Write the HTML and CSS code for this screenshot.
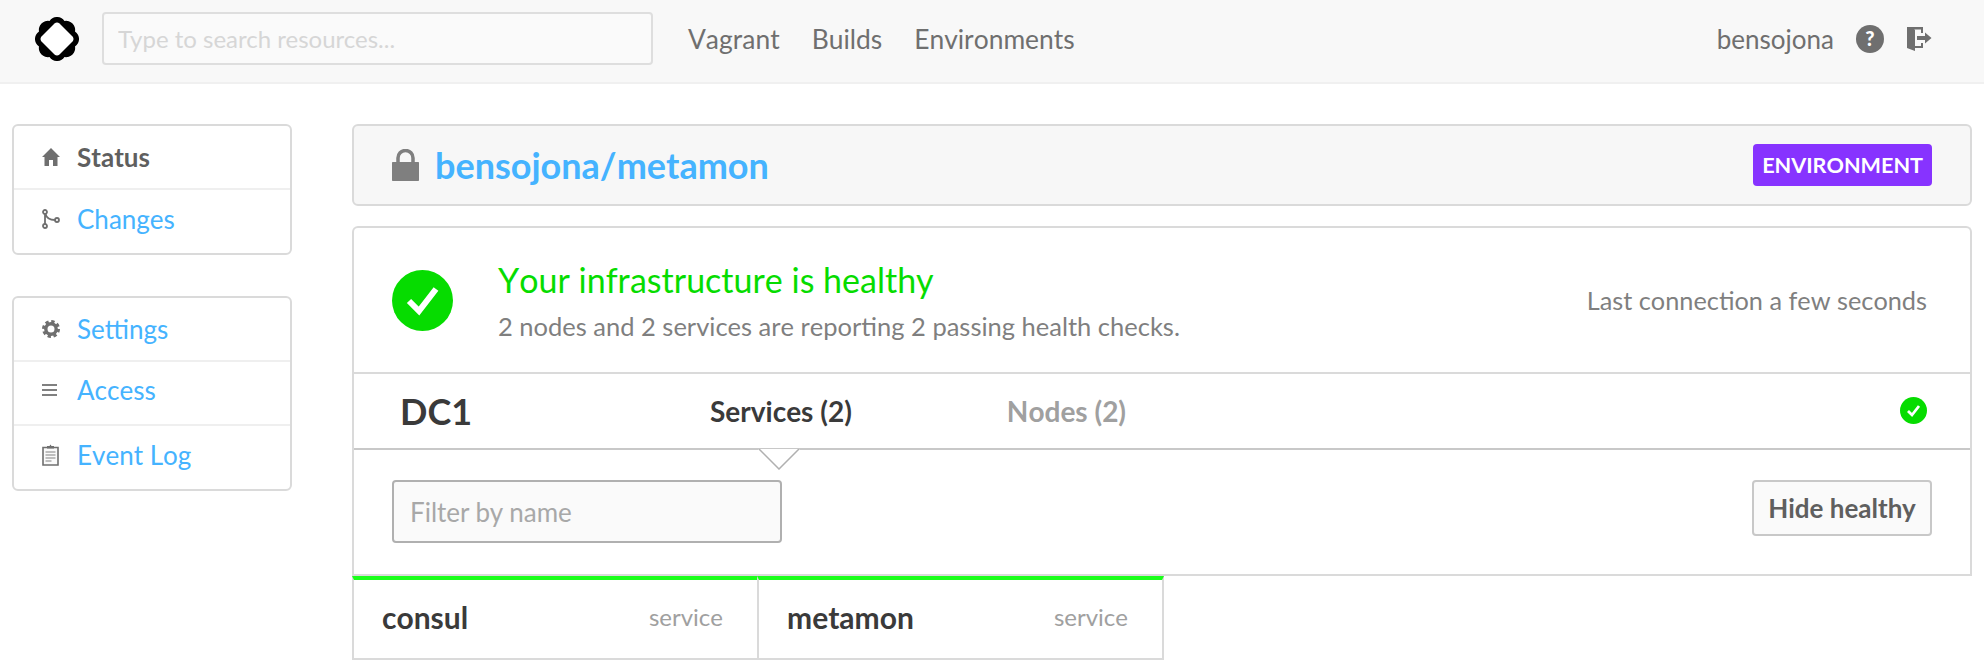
FILE: index.html

```html
<!DOCTYPE html>
<html lang="en">
<head>
  <meta charset="UTF-8">
  <title>bensojona/metamon - Status</title>
  <meta name="viewport" content="width=device-width, initial-scale=1.0">
  <link rel="stylesheet" href="styles.css">
</head>
<body>

<header class="topbar">
  <svg class="logo" viewBox="0 0 44 44">
    <path d="M14.5 4A9 9 0 0 1 29.5 4A9 9 0 0 1 40 14.5A9 9 0 0 1 40 29.5A9 9 0 0 1 29.500 40A9 9 0 0 1 14.500 40A9 9 0 0 1 4 29.500A9 9 0 0 1 4 14.500A9 9 0 0 1 14.500 4Z" fill="#000"/>
    <path d="M19.500 6.500Q22 4.500 24.500 6.500L37.500 19.500Q39.500 22 37.500 24.500L24.500 37.500Q22 39.500 19.500 37.500L6.500 24.500Q4.500 22 6.500 19.500Z" fill="#fff"/>
  </svg>
  <input class="search" type="text" placeholder="Type to search resources...">
  <nav class="topnav">
    <a href="#">Vagrant</a>
    <a href="#">Builds</a>
    <a href="#">Environments</a>
  </nav>
  <div class="account">
    <span class="username">bensojona</span>
    <svg class="help" viewBox="0 0 28 28">
      <circle cx="14" cy="14" r="14" fill="#6f6f6f"/>
      <text x="14" y="21" text-anchor="middle" class="help-mark">?</text>
    </svg>
    <svg class="logout" viewBox="0 0 25 24">
      <path d="M0 0h16v6h-2V2.500H7L8 3v16h6v-3h2v5H8v3l-8-3z" fill="#6f6f6f"/>
      <path d="M10 9h8V5.500l6.500 5.500-6.500 5.500V13h-8z" fill="#6f6f6f"/>
    </svg>
  </div>
</header>

<div class="page">
  <aside class="sidebar">
    <ul class="side-box">
      <li class="active">
        <svg class="side-icon" viewBox="0 0 18 22"><path d="M9 2l9 9h-2.500v9H11v-6H7v6H2.500v-9H0z" fill="#6f6f6f"/></svg>
        <span>Status</span>
      </li>
      <li>
        <svg class="side-icon" viewBox="0 0 18 20"><g fill="none" stroke="#6f6f6f" stroke-width="1.800"><circle cx="3" cy="3" r="2"/><circle cx="3" cy="17" r="2"/><circle cx="15" cy="11" r="2"/><path d="M3 5v10M3.500 5c1 4 5 6 9.500 6"/></g></svg>
        <a href="#">Changes</a>
      </li>
    </ul>
    <ul class="side-box">
      <li>
        <svg class="side-icon" viewBox="0 0 18 18"><g fill="none" stroke="#6f6f6f"><circle cx="9" cy="9" r="5.200" stroke-width="3.400"/><circle cx="9" cy="9" r="7.500" stroke-width="3" stroke-dasharray="3.300 2.590"/></g></svg>
        <a href="#">Settings</a>
      </li>
      <li>
        <svg class="side-icon" viewBox="0 0 18 12"><path d="M0 0h15v2H0zM0 5h15v2H0zM0 10h15v2H0z" fill="#808080"/></svg>
        <a href="#">Access</a>
      </li>
      <li>
        <svg class="side-icon" viewBox="0 0 18 22"><path d="M1 3.500h15v17.500H1z" fill="#fafafa" stroke="#6f6f6f" stroke-width="1.600"/><path d="M5 4.500V2h2.500L8.500.5 9.500 2H12v2.500z" fill="#6f6f6f"/><path d="M3.500 8h10M3.500 11h10M3.500 14h10M3.500 17h6" stroke="#aaa" stroke-width="1.400"/></svg>
        <a href="#">Event Log</a>
      </li>
    </ul>
  </aside>

  <main class="content">
    <div class="titlebar">
      <svg class="lock" viewBox="0 0 27 32"><path d="M1 13h25c.6 0 1 .4 1 1v17c0 .6-.4 1-1 1H1c-.6 0-1-.4-1-1V14c0-.6.400-1 1-1z" fill="#7f7f7f"/><path d="M6 14V9c0-4 3-7.500 7.500-7.500S21 5 21 9v5" fill="none" stroke="#7f7f7f" stroke-width="3.500"/></svg>
      <a class="repo" href="#">bensojona/metamon</a>
      <span class="badge">ENVIRONMENT</span>
    </div>

    <section class="panel">
      <div class="health">
        <svg class="health-icon" viewBox="0 0 61 61">
          <circle cx="30.500" cy="30.500" r="30.500" fill="#06dc00"/>
          <path d="M17 31l10 10 17-22" fill="none" stroke="#fff" stroke-width="6"/>
        </svg>
        <div class="health-text">
          <h2>Your infrastructure is healthy</h2>
          <p>2 nodes and 2 services are reporting 2 passing health checks.</p>
        </div>
        <span class="last-conn">Last connection a few seconds</span>
      </div>

      <div class="tabs">
        <span class="dc">DC1</span>
        <a class="tab tab-active" href="#">Services (2)</a>
        <a class="tab tab-off" href="#">Nodes (2)</a>
        <svg class="dc-check" viewBox="0 0 27 27">
          <circle cx="13.500" cy="13.500" r="13.500" fill="#06dc00"/>
          <path d="M8 14l4 4 7-9" fill="none" stroke="#fff" stroke-width="2.800"/>
        </svg>
        <svg class="tab-arrow" viewBox="0 0 42 21">
          <path d="M0 0h42L21 20z" fill="#fff"/>
          <path d="M1 0l20 20L41 0" fill="none" stroke="#b0b0b0" stroke-width="1.500"/>
        </svg>
      </div>

      <div class="filters">
        <input class="filter" type="text" placeholder="Filter by name">
        <button class="hide-btn" type="button">Hide healthy</button>
      </div>
    </section>

    <div class="cards">
      <div class="card">
        <span class="card-name">consul</span>
        <span class="card-type">service</span>
      </div>
      <div class="card">
        <span class="card-name">metamon</span>
        <span class="card-type">service</span>
      </div>
    </div>
  </main>
</div>

</body>
</html>
```

FILE: styles.css

```css
body {
  font-family: 'Lato', 'Open Sans', sans-serif;
  font-kerning: none;
  background: #fff;
  color: #6f6f6f;
  margin: 0;
  padding: 0;
  font-size: 26px;
}
a {
  text-decoration: none;
}
ul {
  list-style: none;
  margin: 0;
  padding: 0;
}

/* top bar */
.topbar {
  display: flex;
  align-items: center;
  height: 78px;
  background: #f8f8f8;
  border-bottom: 2px solid #f0f0f0;
  padding: 0 52px 4px 35px;
}
.logo {
  width: 44px;
  height: 44px;
  margin-right: 23px;
}
.search {
  width: 551px;
  height: 53px;
  box-sizing: border-box;
  border: 2px solid #dedede;
  border-radius: 4px;
  background: #fafafa;
  padding: 0 14px;
  margin-bottom: 2px;
  font: 24px 'Lato', sans-serif;
}
.search::placeholder {
  color: #d6d6d6;
}
.topnav {
  display: flex;
  gap: 32px;
  margin-left: 35px;
  font-size: 26.4px;
}
.topnav a {
  color: #6f6f6f;
}
.account {
  display: flex;
  align-items: center;
  margin-left: auto;
}
.username {
  margin-right: 22px;
}
.help {
  width: 28px;
  height: 28px;
  margin-right: 23px;
}
.help-mark {
  font: 900 20px 'Lato', sans-serif;
  fill: #fff;
}
.logout {
  width: 25px;
  height: 24px;
}

/* layout */
.page {
  display: flex;
  align-items: flex-start;
  padding: 40px 12px 0;
}
.sidebar {
  width: 280px;
  margin-right: 60px;
  flex-shrink: 0;
}
.side-box {
  border: 2px solid #dadada;
  border-radius: 6px;
  margin-bottom: 41px;
}
.side-box li {
  display: flex;
  align-items: center;
  height: 56px;
  padding: 0 0 6px 28px;
  border-top: 2px solid #efefef;
}
.side-box li:first-child {
  height: 62px;
  padding-bottom: 0;
  border-top: none;
}
.side-box li:last-child {
  height: 57px;
}
.side-box a {
  color: #45b3ff;
}
.side-box .active {
  font-weight: 700;
  color: #5f5f5f;
}
.side-icon {
  width: 18px;
  height: 22px;
  margin-right: 17px;
  flex-shrink: 0;
}

/* main column */
.content {
  flex: 1;
}
.titlebar {
  display: flex;
  align-items: center;
  height: 78px;
  background: #f7f7f7;
  border: 2px solid #dadada;
  border-radius: 6px;
  padding: 0 38px;
  margin-bottom: 20px;
}
.lock {
  width: 27px;
  height: 32px;
  margin-right: 16px;
}
.repo {
  color: #45b3ff;
  font-size: 36px;
  font-weight: 700;
}
.badge {
  margin-left: auto;
  background: #8733ff;
  color: #fff;
  font-size: 21.6px;
  font-weight: 700;
  line-height: 42px;
  padding: 0 9px;
  border-radius: 4px;
}
.panel {
  border: 2px solid #dadada;
  border-bottom: none;
  border-radius: 6px 6px 0 0;
}
.health {
  display: flex;
  align-items: center;
  height: 144px;
  padding: 0 43px 0 38px;
}
.health-icon {
  width: 61px;
  height: 61px;
  margin-right: 45px;
}
.health-text {
  padding-top: 2px;
}
.health-text h2 {
  margin: 0;
  font-size: 34px;
  font-weight: 400;
  color: #06dc00;
  line-height: 40px;
}
.health-text p {
  margin: 10px 0 0;
  font-size: 25.5px;
  color: #7f7f7f;
  line-height: 32px;
}
.last-conn {
  margin-left: auto;
  font-size: 25.3px;
  color: #7f7f7f;
}
.tabs {
  position: relative;
  display: flex;
  align-items: center;
  height: 73px;
  border-top: 2px solid #dadada;
  border-bottom: 2px solid #c8c8c8;
  padding: 0 43px 1px 46px;
  font-weight: 700;
}
.dc {
  font-size: 36px;
  color: #3a3a3a;
  width: 310px;
}
.tab {
  font-size: 28px;
}
.tab-active {
  color: #3a3a3a;
  margin-right: 155px;
}
.tab-off {
  color: #a0a0a0;
}
.dc-check {
  width: 27px;
  height: 27px;
  margin-left: auto;
}
.tab-arrow {
  position: absolute;
  left: 404px;
  top: 75px;
  width: 42px;
  height: 21px;
}
.filters {
  display: flex;
  justify-content: space-between;
  align-items: flex-start;
  height: 94px;
  padding: 30px 38px 0;
  border-bottom: 2px solid #dadada;
}
.filter {
  width: 390px;
  height: 63px;
  box-sizing: border-box;
  border: 2px solid #b0b0b0;
  border-radius: 4px;
  background: #fafafa;
  padding: 0 16px;
  font: 26px 'Lato', sans-serif;
}
.filter::placeholder {
  color: #a8a8a8;
}
.hide-btn {
  width: 180px;
  height: 56px;
  border: 2px solid #c8c8c8;
  border-radius: 4px;
  background: #fafafa;
  color: #5f5f5f;
  font: 700 26px 'Lato', sans-serif;
  padding: 0;
}
.cards {
  display: flex;
}
.card {
  display: flex;
  align-items: center;
  justify-content: space-between;
  box-sizing: border-box;
  width: 407px;
  height: 84px;
  border: 2px solid #dadada;
  border-top: 4px solid #1aff1a;
  padding: 0 34px 4px 28px;
}
.card + .card {
  margin-left: -2px;
}
.card-name {
  font-size: 30px;
  font-weight: 700;
  color: #3a3a3a;
}
.card-type {
  color: #a0a0a0;
  font-size: 24px;
  margin-bottom: 2px;
}
```
